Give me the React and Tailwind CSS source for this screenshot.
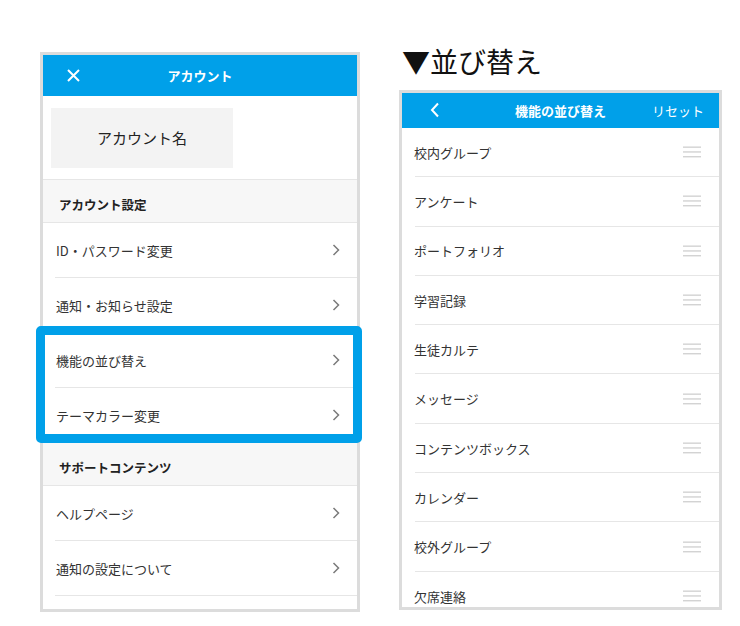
import React from 'react';

const accountRows1 = ['ID・パスワード変更', '通知・お知らせ設定', '機能の並び替え', 'テーマカラー変更'];
const accountRows2 = ['ヘルプページ', '通知の設定について'];
const sortItems = [
  '校内グループ', 'アンケート', 'ポートフォリオ', '学習記録', '生徒カルテ',
  'メッセージ', 'コンテンツボックス', 'カレンダー', '校外グループ', '欠席連絡',
];

const Chevron = () => (
  <svg width="8" height="12" viewBox="0 0 8 12" fill="none">
    <path d="M1.5 1 L6.5 6 L1.5 11" stroke="#7a7a7a" strokeWidth="1.5" />
  </svg>
);

const Handle = () => (
  <svg width="18" height="12" viewBox="0 0 18 12">
    <rect x="0" y="0.5" width="18" height="1.3" fill="#cfcfcf" />
    <rect x="0" y="5.3" width="18" height="1.3" fill="#cfcfcf" />
    <rect x="0" y="10.1" width="18" height="1.3" fill="#cfcfcf" />
  </svg>
);

const SectionHeader = ({ children }) => (
  <div className="h-[43px] bg-[#f7f7f7] border-b border-[#e6e6e6] flex items-center pl-4 pt-[9px] text-[12.5px] font-bold text-[#222]">
    {children}
  </div>
);

const MenuRow = ({ label }) => (
  <div className="h-[55px] ml-3 border-b border-[#e6e6e6] flex items-center justify-between pl-px pr-[17px] text-[13px] text-[#333]">
    <span className="pt-[2px]">{label}</span>
    <Chevron />
  </div>
);

const App = () => {
  return (
    <div className="w-[740px] h-[626px] bg-white flex items-start font-['Noto_Sans_CJK_JP',sans-serif] overflow-hidden">
      {/* left: account screen */}
      <div className="relative mt-[52px] ml-[40px]">
        <div className="w-[320px] h-[560px] border-[3px] border-[#dcdcdc] bg-white overflow-hidden flex flex-col">
          <div className="h-[41px] bg-[#00a0e9] relative flex items-center justify-center shrink-0">
            <svg className="absolute left-[24px] top-[14px]" width="13" height="13" viewBox="0 0 13 13">
              <path d="M1 1 L12 12 M12 1 L1 12" stroke="white" strokeWidth="2" />
            </svg>
            <span className="text-white text-[13px] font-bold">アカウント</span>
          </div>
          <div className="h-[84px] border-b border-[#e6e6e6] pl-2 pt-3 shrink-0">
            <div className="w-[182px] h-[60px] bg-[#f3f3f3] flex items-center justify-center text-[15px] text-[#222]">
              アカウント名
            </div>
          </div>
          <SectionHeader>アカウント設定</SectionHeader>
          {accountRows1.map((r) => <MenuRow key={r} label={r} />)}
          <SectionHeader>サポートコンテンツ</SectionHeader>
          {accountRows2.map((r) => <MenuRow key={r} label={r} />)}
        </div>
        {/* highlight */}
        <div className="absolute left-[-4px] top-[274px] w-[326px] h-[117px] border-[9px] border-[#00a0e9] rounded-[5px]" />
      </div>

      {/* right: sort screen */}
      <div className="ml-[39px] mt-[43px]">
        <div className="h-[36px] leading-[36px] text-[28px] text-[#111] pl-[3px]">▼並び替え</div>
        <div className="mt-[11px] w-[323px] h-[520px] border-[3px] border-[#dcdcdc] bg-white overflow-hidden">
          <div className="h-[35px] bg-[#00a0e9] relative flex items-center justify-center">
            <svg className="absolute left-[28px] top-[9px]" width="10" height="16" viewBox="0 0 10 16">
              <path d="M8 1.5 L2 8 L8 14.5" stroke="white" strokeWidth="2" fill="none" />
            </svg>
            <span className="text-white text-[13px] font-bold">機能の並び替え</span>
            <span className="absolute right-[15px] top-0 h-[35px] flex items-center text-white text-[13px]">リセット</span>
          </div>
          {sortItems.map((item) => (
            <div key={item} className="h-[49.3px] ml-[13px] border-b border-[#e6e6e6] flex items-center justify-between pr-[18px] text-[13px] text-[#333]">
              <span className="-ml-px pt-px">{item}</span>
              <Handle />
            </div>
          ))}
        </div>
      </div>
    </div>
  );
};

export default App;
